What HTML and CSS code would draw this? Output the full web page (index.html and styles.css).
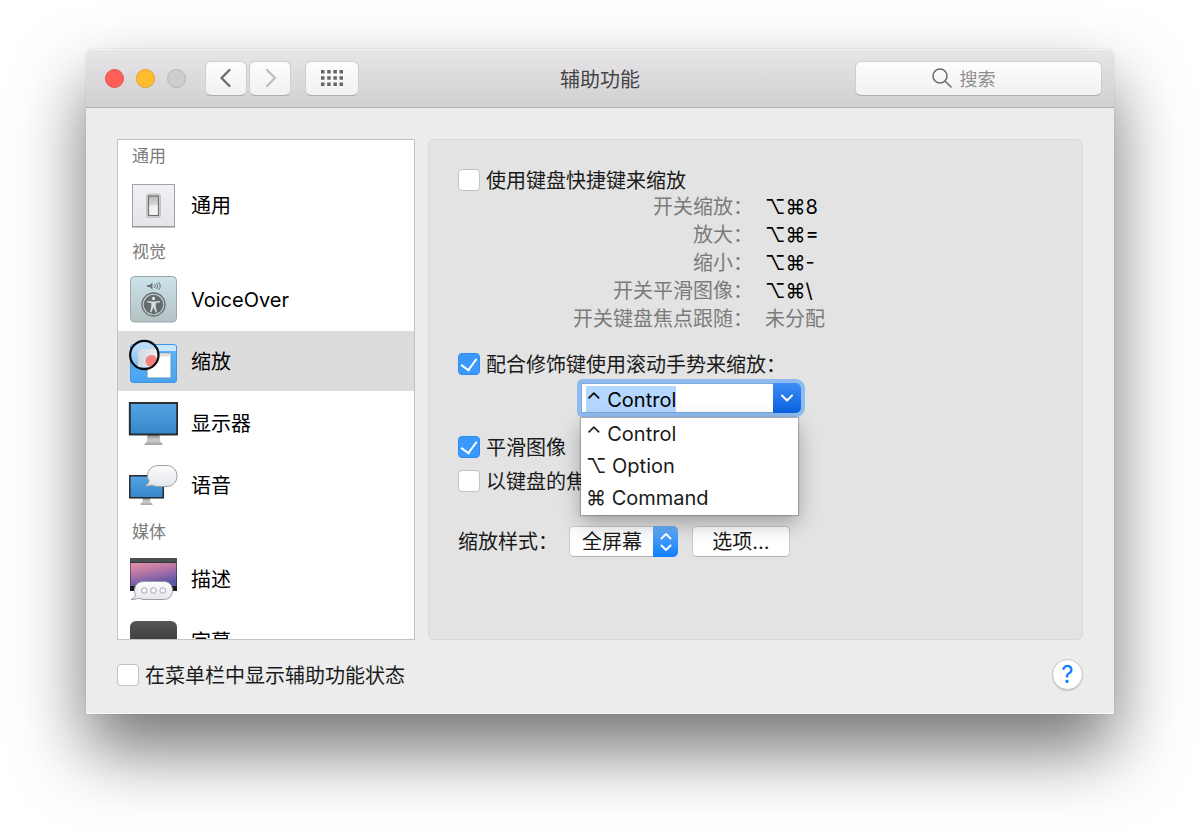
FILE: index.html
```
<!DOCTYPE html>
<html lang="zh-CN">
<head>
  <meta charset="UTF-8">
  <meta name="viewport" content="width=device-width, initial-scale=1.0">
  <title>辅助功能</title>
  <link rel="stylesheet" href="styles.css">
</head>
<body>

<main class="window">
  <!-- 标题栏 -->
  <header class="titlebar">
    <div class="titlebar-left">
      <div class="lights">
        <button class="light red" aria-label="关闭"></button>
        <button class="light yellow" aria-label="最小化"></button>
        <button class="light" aria-label="缩放窗口" disabled></button>
      </div>
      <nav class="nav-buttons">
        <button class="tool-btn" aria-label="后退">
          <svg width="14" height="20" viewBox="0 0 14 20"><path d="M10.5 2 2.5 10l8 8" fill="none" stroke="#6b6e6d" stroke-width="2.4" stroke-linecap="round" stroke-linejoin="round"/></svg>
        </button>
        <button class="tool-btn" aria-label="前进" disabled>
          <svg width="14" height="20" viewBox="0 0 14 20"><path d="M4 2l8 8-8 8" fill="none" stroke="#bdbdbd" stroke-width="2.2" stroke-linecap="round" stroke-linejoin="round"/></svg>
        </button>
      </nav>
      <button class="tool-btn grid-btn" aria-label="显示全部">
        <svg width="22" height="16" viewBox="0 0 22 16" fill="#666">
          <path d="M0 0h3.500v3.500H0zM6.200 0h3.500v3.500H6.200zM12.400 0h3.500v3.500h-3.500zM18.500 0H22v3.500h-3.500zM0 6.200h3.500v3.500H0zM6.200 6.200h3.500v3.500H6.200zM12.400 6.200h3.500v3.500h-3.500zM18.500 6.200H22v3.500h-3.500zM0 12.500h3.500V16H0zM6.200 12.500h3.500V16H6.200zM12.400 12.500h3.500V16h-3.500zM18.500 12.500H22V16h-3.500z"/>
        </svg>
      </button>
    </div>
    <h1 class="title">辅助功能</h1>
    <label class="search">
      <svg width="20" height="20" viewBox="0 0 20 20" fill="none" stroke="#6e6e6e" stroke-width="1.6" stroke-linecap="round"><circle cx="8" cy="8" r="7"/><path d="M13.200 13.200 19 19"/></svg>
      <input type="search" placeholder="搜索" aria-label="搜索">
    </label>
  </header>

  <div class="content">
    <!-- 侧边列表 -->
    <nav class="sidebar">
      <h2 class="section">通用</h2>
      <a href="#" class="item">
        <svg class="icon" viewBox="0 0 50 50">
          <defs>
            <linearGradient id="plate" x2="0" y2="1"><stop stop-color="#f0f1f4"/><stop offset="1" stop-color="#e4e5ea"/></linearGradient>
            <linearGradient id="toggle" x2="0" y2="1"><stop stop-color="#b9b9b9"/><stop offset=".45" stop-color="#d8d8d8"/><stop offset=".5" stop-color="#f0f0f0"/><stop offset="1" stop-color="#f6f6f6"/></linearGradient>
          </defs>
          <rect x="4.500" y="4.500" width="42" height="42" fill="url(#plate)" stroke="#a3a3a3"/>
          <path d="M4 47h43" stroke="#8d8d8d"/>
          <rect x="18.500" y="14" width="14" height="23.500" rx="2" fill="#d5d5d7" stroke="#c2c2c4"/>
          <rect x="20.500" y="16" width="10" height="19.500" fill="url(#toggle)" stroke="#6e6e6e" stroke-width="1.200"/>
        </svg>
        <span>通用</span>
      </a>

      <h2 class="section">视觉</h2>
      <a href="#" class="item">
        <svg class="icon" viewBox="0 0 50 50">
          <defs><linearGradient id="voice" x2="0" y2="1"><stop stop-color="#cbe3ea"/><stop offset="1" stop-color="#b5c1c3"/></linearGradient></defs>
          <rect x="2.500" y="2.500" width="46" height="45.500" rx="4" fill="url(#voice)" stroke="#9ba9ad"/>
          <path d="M19 11h2.500l3-2.500v7l-3-2.500H19z" fill="#6b7678"/>
          <path d="M26.500 10q1.500 2 0 4M28.500 9q2.500 3 0 6M30.500 8q3.500 4 0 8" fill="none" stroke="#6b7678"/>
          <circle cx="25.500" cy="30.500" r="11.500" fill="none" stroke="#646b6d" stroke-width="1.300"/>
          <circle cx="25.500" cy="30.500" r="9.700" fill="#646b6d"/>
          <circle cx="25.500" cy="24.500" r="1.700" fill="#d3dfe2"/>
          <path d="M19 27l4.500.600h4l4.500-.600v1.300l-4.300.900v3.200l1.300 5.800h-1.400l-2.100-5-2.100 5H22l1.300-5.800v-3.200l-4.300-.9z" fill="#d3dfe2"/>
        </svg>
        <span>VoiceOver</span>
      </a>
      <a href="#" class="item selected" aria-current="page">
        <svg class="icon" viewBox="0 0 50 50">
          <defs>
            <linearGradient id="sky" x2="0" y2="1"><stop stop-color="#5cb8f9"/><stop offset="1" stop-color="#48a4f2"/></linearGradient>
            <linearGradient id="lens" x2="0" y2="1"><stop stop-color="#c9e5fb"/><stop offset=".5" stop-color="#9fd0f8"/><stop offset="1" stop-color="#6fb5f0"/></linearGradient>
            <linearGradient id="pane" x2="1" y2="0"><stop stop-color="#d3d8df"/><stop offset="1" stop-color="#f1f2f5"/></linearGradient>
            <clipPath id="lensClip"><circle cx="16.300" cy="19" r="13.500"/></clipPath>
          </defs>
          <rect x="2.500" y="8.500" width="46" height="38" rx="2.500" fill="url(#sky)" stroke="#3f95e4"/>
          <path d="M3 15V11q0-2 2-2h41q2 0 2 2v4z" fill="#c8e7fb"/>
          <rect x="19" y="17" width="24" height="25" rx="1.500" fill="#fff" stroke="#5f93be"/>
          <path d="M19.500 17.500h23v3h-23z" fill="#dedede"/>
          <g clip-path="url(#lensClip)">
            <path d="M0 3h34v32H0z" fill="url(#lens)"/>
            <path d="M10 31V17q0-4 4-4h20v18z" fill="url(#pane)"/>
            <circle cx="23.500" cy="25" r="6" fill="#f47f7d"/>
          </g>
          <circle cx="16.300" cy="19" r="14.200" fill="none" stroke="#0b0b0b" stroke-width="2.200"/>
        </svg>
        <span>缩放</span>
      </a>
      <a href="#" class="item">
        <svg class="icon" viewBox="0 0 50 50">
          <defs>
            <linearGradient id="screen" x2="0" y2="1"><stop stop-color="#55a5e5"/><stop offset="1" stop-color="#3585c9"/></linearGradient>
            <linearGradient id="stand" x2="0" y2="1"><stop stop-color="#8a8a8a"/><stop offset=".5" stop-color="#cfcfcf"/><stop offset="1" stop-color="#a5a5a5"/></linearGradient>
          </defs>
          <path d="M19.500 37h12l1 7 2 1.500v1.500h-18v-1.500l2-1.500z" fill="url(#stand)"/>
          <rect x="1.800" y="5" width="47.400" height="31.500" fill="url(#screen)" stroke="#26292c" stroke-width="1.900"/>
        </svg>
        <span>显示器</span>
      </a>
      <a href="#" class="item">
        <svg class="icon" viewBox="0 0 50 50">
          <defs><linearGradient id="bubble" x2="0" y2="1"><stop stop-color="#fcfcfd"/><stop offset="1" stop-color="#e4e6ea"/></linearGradient></defs>
          <path d="M15 38h7l.7 4.500 1.800 1v1.500h-12v-1.500l1.800-1z" fill="url(#stand)"/>
          <rect x="1.800" y="15.800" width="33.500" height="22" fill="url(#screen)" stroke="#26292c" stroke-width="1.500"/>
          <path d="M31 5.500h7c7 0 11 4.500 11 10.500s-4 10.500-11 10.500h-9c-3-.5-4-1.500-5.500-1.300-2 .3-3.500 1.300-6 .6 2-1.500 3.500-3 3.500-5.500-.8-1.300-1.500-2.500-1.500-4.300 0-6 4.500-10.500 11.500-10.500z" fill="url(#bubble)" stroke="#9b9da0"/>
        </svg>
        <span>语音</span>
      </a>

      <h2 class="section">媒体</h2>
      <a href="#" class="item">
        <svg class="icon" viewBox="0 0 50 50">
          <defs><linearGradient id="dusk" x1="0" y1="0" x2=".4" y2="1"><stop stop-color="#ea93a6"/><stop offset=".5" stop-color="#b073a8"/><stop offset="1" stop-color="#5d55a6"/></linearGradient></defs>
          <path d="M2 4h47v33H2z" fill="#1d1d1f"/>
          <path d="M2 4h47v4.500H2z" fill="#4b5052"/>
          <path d="M2.500 9h46v23h-46z" fill="url(#dusk)"/>
          <path d="M16 27.500h19.500c6 0 9 4 9 9s-3 9-9 9H16c-3 0-3-1-5-1.200-2-.1-4 1.700-8 1.200 3-1.500 4-2.500 4.500-4.500-.5-1-1-2.500-1-4.500 0-5 3.500-9 9.500-9z" fill="url(#bubble)" stroke="#9b9da0"/>
          <g fill="#f7f8fa" stroke="#a2a4a8"><circle cx="16.300" cy="36.500" r="2.800"/><circle cx="25.500" cy="36.500" r="2.800"/><circle cx="34.700" cy="36.500" r="2.800"/></g>
        </svg>
        <span>描述</span>
      </a>
      <a href="#" class="item">
        <svg class="icon" viewBox="0 0 50 50">
          <defs><linearGradient id="caption" x2="0" y2="1"><stop stop-color="#565656"/><stop offset="1" stop-color="#222"/></linearGradient></defs>
          <rect x="2" y="5" width="47" height="42" rx="6" fill="url(#caption)"/>
        </svg>
        <span>字幕</span>
      </a>
    </nav>

    <!-- 缩放设置 -->
    <section class="panel">
      <label class="option"><input type="checkbox"><span>使用键盘快捷键来缩放</span></label>
      <dl class="shortcuts">
        <dt>开关缩放：</dt><dd>⌥⌘8</dd>
        <dt>放大：</dt><dd>⌥⌘=</dd>
        <dt>缩小：</dt><dd>⌥⌘-</dd>
        <dt>开关平滑图像：</dt><dd>⌥⌘\</dd>
        <dt>开关键盘焦点跟随：</dt><dd class="unset">未分配</dd>
      </dl>

      <label class="option scroll-option"><input type="checkbox" checked><span>配合修饰键使用滚动手势来缩放：</span></label>
      <div class="combo">
        <input type="text" id="modifier" value="⌃ Control" role="combobox" aria-expanded="true" aria-controls="modifierList" aria-label="修饰键" autofocus>
        <button class="combo-btn" aria-label="打开列表">
          <svg width="14" height="8" viewBox="0 0 14 8"><path d="M2 1.500l5 5 5-5" fill="none" stroke="#fff" stroke-width="2" stroke-linecap="round" stroke-linejoin="round"/></svg>
        </button>
        <ul class="combo-list" id="modifierList" role="listbox">
          <li role="option">⌃ Control</li>
          <li role="option">⌥ Option</li>
          <li role="option">⌘ Command</li>
        </ul>
      </div>

      <div class="toggles">
        <label class="option"><input type="checkbox" checked><span>平滑图像</span></label>
        <label class="option"><input type="checkbox"><span>以键盘的焦</span></label>
      </div>

      <div class="style-row">
        <label for="zoomStyle">缩放样式：</label>
        <div class="popup">
          <select id="zoomStyle">
            <option>全屏幕</option>
            <option>画中画</option>
          </select>
          <span class="popup-arrows">
            <svg width="14" height="20" viewBox="0 0 14 20"><path d="M2.500 6.500 7 2l4.500 4.500M2.500 13.500 7 18l4.500-4.500" fill="none" stroke="#fff" stroke-width="2" stroke-linecap="round" stroke-linejoin="round"/></svg>
          </span>
        </div>
        <button class="push-btn">选项...</button>
      </div>
    </section>
  </div>

  <footer class="footer">
    <label class="option"><input type="checkbox"><span>在菜单栏中显示辅助功能状态</span></label>
    <button class="help-btn" aria-label="帮助">?</button>
  </footer>
</main>

<script>
  // 打开时选中组合框里的文字
  const modifier = document.getElementById('modifier');
  modifier.focus();
  modifier.select();
</script>
</body>
</html>
```
FILE: styles.css
```
:root {
  --text: #1a1a1a;
  --muted: #7b7b7b;
  --blue: #3b99fc;
  --line: #c3c3c3;
}

* {
  margin: 0;
  padding: 0;
  box-sizing: border-box;
}

body {
  min-height: 100vh;
  padding: 49px 86px 0;
  background: #fff;
  color: var(--text);
  font-family: Inter, "Noto Sans CJK SC", sans-serif;
  font-size: 20px;
  line-height: 28px;
}

button,
input,
select {
  font: inherit;
  color: inherit;
}

.window {
  background: #ececec;
  border-radius: 7px 7px 0 0;
  box-shadow: 0 0 1px rgba(0, 0, 0, 0.4), 0 36px 70px rgba(0, 0, 0, 0.55);
}

/* 标题栏 */
.titlebar {
  display: grid;
  grid-template-columns: 1fr auto 1fr;
  align-items: center;
  height: 59px;
  padding: 0 12px;
  border-radius: 7px 7px 0 0;
  background: linear-gradient(#e8e6e8, #d1cfd1);
  border-bottom: 1px solid #b2b0b2;
  box-shadow: inset 0 1px 0 #f4f3f4;
}

.titlebar-left {
  display: flex;
  align-items: center;
  padding-left: 7px;
}

.lights {
  display: flex;
  gap: 12px;
  margin-right: 19px;
}

.light {
  width: 19px;
  height: 19px;
  border: 1px solid #b9b7b9;
  border-radius: 50%;
  background: #cfcdcf;
}

.light.red {
  background: #ff5f57;
  border-color: #e2504a;
}

.light.yellow {
  background: #ffbd2e;
  border-color: #dfa023;
}

.nav-buttons {
  display: flex;
  gap: 2px;
  margin-right: 14px;
}

.tool-btn {
  display: flex;
  align-items: center;
  justify-content: center;
  width: 42px;
  height: 35px;
  border: 1px solid #cfcdcf;
  border-bottom-color: #b0aeb0;
  border-radius: 6px;
  background: linear-gradient(#fdfdfd, #f1f1f1);
}

.grid-btn {
  width: 54px;
}

.title {
  padding-top: 4px;
  font-size: 20px;
  font-weight: 400;
  color: #454545;
}

.search {
  justify-self: end;
  display: flex;
  align-items: center;
  justify-content: center;
  gap: 8px;
  width: 247px;
  height: 35px;
  padding-left: 22px;
  border: 1px solid #cfcdcf;
  border-bottom-color: #b0aeb0;
  border-radius: 6px;
  background: linear-gradient(#fdfdfd, #f1f1f1);
}

.search input {
  width: 88px;
  padding-top: 3px;
  border: 0;
  outline: 0;
  background: none;
  font-size: 18px;
}

.search input::placeholder {
  color: #8e8e8e;
}

/* 主体 */
.content {
  display: grid;
  grid-template-columns: 298px 1fr;
  gap: 13px;
  padding: 31px 31px 0;
}

.sidebar {
  height: 501px;
  overflow: hidden;
  background: #fff;
  border: 1px solid var(--line);
}

.section {
  height: 32px;
  padding-left: 14px;
  font-size: 17px;
  font-weight: 400;
  line-height: 32px;
  color: var(--muted);
}

.section:first-child {
  height: 34px;
}

.item {
  display: flex;
  align-items: center;
  gap: 13px;
  height: 60px;
  margin: 1px 0;
  padding-left: 10px;
  color: #000;
  text-decoration: none;
}

.item + .item {
  margin-top: 2px;
}

.item.selected {
  background: #dcdcdc;
}

.item span,
.option span {
  padding-top: 2px;
}

.icon {
  width: 50px;
  height: 50px;
}

/* 右侧面板 */
.panel {
  padding: 27px 29px;
  background: #e3e3e3;
  border: 1px solid #d8d8d8;
  border-radius: 6px;
}

.option {
  display: flex;
  align-items: center;
  gap: 6px;
  height: 26px;
  white-space: nowrap;
}

.option input {
  display: grid;
  place-items: center;
  width: 22px;
  height: 22px;
  appearance: none;
  background: #fff;
  border: 1px solid #c2c2c2;
  border-radius: 4px;
}

.option input:checked {
  background: var(--blue);
  border-color: #2f8cf0;
}

.option input:checked::before {
  content: '';
  width: 8px;
  height: 13px;
  margin-bottom: 3px;
  border: solid #fff;
  border-width: 0 2px 2px 0;
  transform: rotate(36deg);
}

.shortcuts {
  display: grid;
  grid-template-columns: 295px auto;
  column-gap: 12px;
}

.shortcuts dt {
  text-align: right;
  color: var(--muted);
}

.shortcuts dd {
  color: #000;
}

.shortcuts .unset {
  color: var(--muted);
}

.scroll-option {
  margin-top: 18px;
}

/* 组合框 */
.combo {
  position: relative;
  display: flex;
  width: 220px;
  height: 30px;
  margin: 6px 0 21px 123px;
  border-radius: 2px 5px 5px 2px;
  box-shadow: 0 0 0 4px #8fbcf0;
}

.combo input {
  flex: 1;
  min-width: 0;
  padding: 3px 4px 0;
  border: 1px solid #7ea9dc;
  border-right: 0;
  outline: 0;
  background: #fff;
  color: #000;
}

.combo input::selection {
  background: #b3d7ff;
  color: #000;
}

.combo-btn {
  width: 28px;
  border: 0;
  border-radius: 0 5px 5px 0;
  background: linear-gradient(#3d8ff5, #0a5fe0);
}

.combo-btn svg {
  display: block;
  margin: 0 auto;
}

.combo-list {
  position: absolute;
  z-index: 1;
  top: 35px;
  left: 0;
  width: 217px;
  padding-bottom: 1px;
  list-style: none;
  background: #fff;
  box-shadow: 0 0 1px 1px rgba(0, 0, 0, 0.2), 0 8px 20px rgba(0, 0, 0, 0.3);
}

.combo-list li {
  padding-left: 5px;
  line-height: 32px;
}

.toggles {
  display: grid;
  gap: 8px;
}

/* 缩放样式 */
.style-row {
  display: flex;
  align-items: center;
  height: 31px;
  margin-top: 32px;
}

.popup {
  position: relative;
  margin: 0 14px 0 11px;
}

.popup select,
.push-btn {
  display: block;
  height: 31px;
  background: #fff;
  border: 1px solid #cacaca;
  border-bottom-color: #b0b0b0;
  border-radius: 5px;
}

.popup select {
  width: 109px;
  padding-left: 12px;
  appearance: none;
}

.popup-arrows {
  position: absolute;
  top: 0;
  right: 0;
  display: grid;
  place-items: center;
  width: 25px;
  height: 31px;
  border-radius: 0 5px 5px 0;
  background: linear-gradient(#69b1fa, #0d7dff);
  pointer-events: none;
}

.push-btn {
  width: 98px;
}

/* 底部 */
.footer {
  display: flex;
  align-items: center;
  justify-content: space-between;
  padding: 19px 31px 23px;
  border-bottom: 1px solid #fafafa;
}

.help-btn {
  width: 31px;
  height: 31px;
  border: 1px solid #c8c8c8;
  border-radius: 50%;
  background: #fff;
  box-shadow: 0 1px 1px rgba(0, 0, 0, 0.15);
  color: #0a7cff;
  font-size: 24px;
}
```
